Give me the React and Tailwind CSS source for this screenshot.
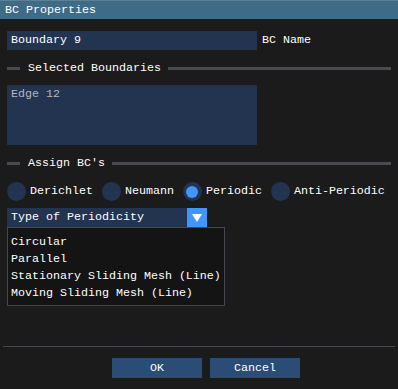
import React from "react";

function Separator({ label }) {
  return (
    <div className="flex items-center h-[13px]">
      <div className="w-[13px] h-[3px] bg-[#4a4a52]" />
      <span className="ml-[8px] mr-[7px] whitespace-pre">{label}</span>
      <div className="flex-1 h-[3px] bg-[#4a4a52]" />
    </div>
  );
}

function Radio({ label, active }) {
  return (
    <div className="flex items-center mr-[9px]">
      <div className="w-[19px] h-[19px] rounded-full bg-[#223450] flex items-center justify-center">
        {active && <div className="w-[12px] h-[12px] rounded-full bg-[#4296fa]" />}
      </div>
      <span className="ml-[4px] whitespace-pre">{label}</span>
    </div>
  );
}

export default function App() {
  const items = [
    "Circular",
    "Parallel",
    "Stationary Sliding Mesh (Line)",
    "Moving Sliding Mesh (Line)",
  ];

  return (
    <div className="w-[398px] h-[389px] bg-[#1b1b1b] text-white text-[11.67px] leading-[13px] font-['Liberation_Mono',monospace] flex flex-col overflow-hidden">
      {/* title bar */}
      <div className="h-[19px] bg-[#3f6b87] border-t border-[#5b7f96] px-[5px] flex items-center shrink-0">
        BC Properties
      </div>

      <div className="px-[7px] flex flex-col">
        {/* BC name */}
        <div className="mt-[12px] flex items-center">
          <div className="w-[250px] h-[19px] bg-[#223450] px-[4px] flex items-center">Boundary 9</div>
          <span className="ml-[5px]">BC Name</span>
        </div>

        <div className="mt-[12px]">
          <Separator label="Selected Boundaries" />
        </div>

        <div className="mt-[10px] w-[250px] h-[60px] bg-[#223450] px-[4px] pt-[3px] text-[#b4b6bc]">
          Edge 12
        </div>

        <div className="mt-[12px]">
          <Separator label="Assign BC's" />
        </div>

        {/* radios */}
        <div className="mt-[12px] flex items-center h-[19px]">
          <Radio label="Derichlet" />
          <Radio label="Neumann" />
          <Radio label="Periodic" active />
          <Radio label="Anti-Periodic" />
        </div>

        {/* combo */}
        <div className="mt-[7px] w-[200px] h-[19px] bg-[#223450] flex items-center">
          <span className="flex-1 px-[4px]">Type of Periodicity</span>
          <div className="w-[20px] h-[19px] bg-[#4296fa] flex items-center justify-center">
            <svg width="10" height="8" viewBox="0 0 10 8">
              <polygon points="0,0 10,0 5,8" fill="#ffffff" />
            </svg>
          </div>
        </div>

        {/* dropdown list */}
        <div className="w-[218px] h-[79px] bg-[#141414] border border-[#46464e] pt-[8px] px-[3px] flex flex-col">
          {items.map((it) => (
            <div key={it} className="h-[17px] whitespace-pre">
              {it}
            </div>
          ))}
        </div>

        {/* bottom separator */}
        <div className="mt-[40px] -mx-[4px] h-[1px] bg-[#46464e]" />

        {/* buttons */}
        <div className="mt-[11px] ml-[105px] flex gap-[8px]">
          <button className="w-[90px] h-[20px] bg-[#2b4c74] flex items-center justify-center">OK</button>
          <button className="w-[90px] h-[20px] bg-[#2b4c74] flex items-center justify-center">Cancel</button>
        </div>
      </div>
    </div>
  );
}
